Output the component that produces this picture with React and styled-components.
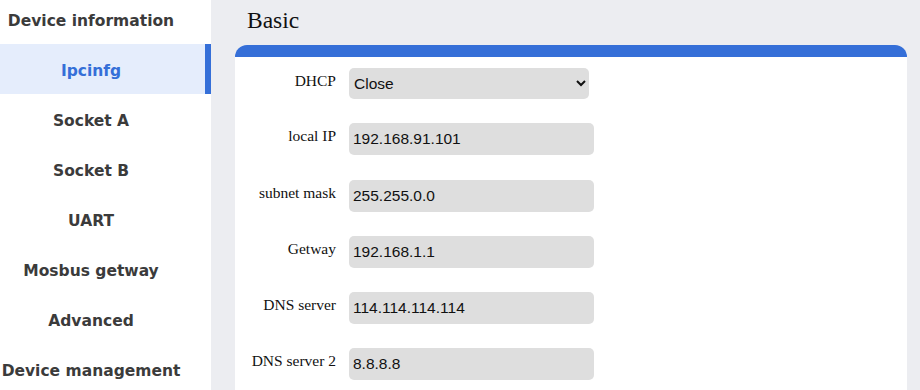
import React from "react";
import styled, { createGlobalStyle } from "styled-components";

const GlobalStyle = createGlobalStyle`
  html, body {
    margin: 0;
    padding: 0;
    background: #ecedf1;
    overflow: hidden;
  }
`;

const Page = styled.div`
  display: flex;
  width: 920px;
  height: 390px;
  overflow: hidden;
`;

const Sidebar = styled.nav`
  width: 211px;
  flex-shrink: 0;
  background: #ffffff;
  display: flex;
  flex-direction: column;
  overflow: hidden;
`;

const NavList = styled.div`
  margin-top: -6px;
  display: flex;
  flex-direction: column;
`;

const NavItem = styled.div`
  height: 50px;
  flex-shrink: 0;
  box-sizing: border-box;
  padding-top: 4px;
  padding-right: 29px;
  display: flex;
  align-items: center;
  justify-content: center;
  white-space: nowrap;
  font-family: "DejaVu Sans", Verdana, sans-serif;
  font-weight: bold;
  font-size: 15.5px;
  color: ${(p) => (p.$active ? "#356fd8" : "#3b3b3b")};
  background: ${(p) => (p.$active ? "#e5edfc" : "transparent")};
  border-right: ${(p) => (p.$active ? "6px solid #356fd8" : "none")};
  padding-left: ${(p) => (p.$active ? "6px" : "0")};
`;

const Main = styled.main`
  flex: 1;
  padding: 0 13px 0 24px;
  display: flex;
  flex-direction: column;
  overflow: hidden;
`;

const Title = styled.h2`
  flex-shrink: 0;
  margin: 0 0 0 12px;
  height: 45px;
  line-height: 40px;
  font-family: "Liberation Serif", "Times New Roman", serif;
  font-weight: normal;
  font-size: 23.5px;
  color: #111;
`;

const Panel = styled.section`
  flex-shrink: 0;
  background: #ffffff;
  border-top: 12px solid #356fd8;
  border-radius: 12px;
  padding: 11px 0 40px;
`;

const Form = styled.div`
  display: grid;
  grid-template-columns: 101px 245px;
  column-gap: 13px;
  row-gap: 24.3px;
`;

const Label = styled.label`
  text-align: right;
  padding-top: 4px;
  font-family: "Liberation Serif", "Times New Roman", serif;
  font-size: 15.5px;
  color: #111;
  white-space: nowrap;
`;

const fieldBase = `
  box-sizing: border-box;
  width: 245px;
  height: 32px;
  border: none;
  border-radius: 5px;
  background: #dedede;
  font-family: "Liberation Sans", Arial, sans-serif;
  font-size: 15.5px;
  color: #111;
  outline: none;
`;

const Select = styled.select`
  ${fieldBase}
  width: 240px;
  height: 31px;
  padding: 0 0 0 1px;
`;

const Input = styled.input`
  ${fieldBase}
  padding: 0 4px;
`;

const nav = [
  "Device information",
  "Ipcinfg",
  "Socket A",
  "Socket B",
  "UART",
  "Mosbus getway",
  "Advanced",
  "Device management",
];

const fields = [
  { label: "local IP", value: "192.168.91.101" },
  { label: "subnet mask", value: "255.255.0.0" },
  { label: "Getway", value: "192.168.1.1" },
  { label: "DNS server", value: "114.114.114.114" },
  { label: "DNS server 2", value: "8.8.8.8" },
];

const App = () => {
  return (
    <Page>
      <GlobalStyle />
      <Sidebar>
        <NavList>
          {nav.map((item) => (
            <NavItem key={item} $active={item === "Ipcinfg"}>
              {item}
            </NavItem>
          ))}
        </NavList>
      </Sidebar>
      <Main>
        <Title>Basic</Title>
        <Panel>
          <Form>
            <Label>DHCP</Label>
            <Select defaultValue="close">
              <option value="close">Close</option>
              <option value="open">Open</option>
            </Select>
            {fields.map((f) => (
              <React.Fragment key={f.label}>
                <Label>{f.label}</Label>
                <Input defaultValue={f.value} />
              </React.Fragment>
            ))}
          </Form>
        </Panel>
      </Main>
    </Page>
  );
};

export default App;
